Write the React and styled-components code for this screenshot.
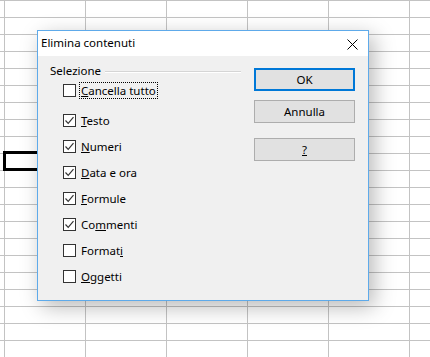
import styled, { createGlobalStyle } from "styled-components";

const GlobalStyle = createGlobalStyle`
  html, body {
    margin: 0;
    padding: 0;
    background: #fff;
  }
  body {
    font-family: "Noto Sans", "Liberation Sans", sans-serif;
    font-size: 11.5px;
    color: #000;
  }
`;

const OPTIONS = [
  { pre: "", key: "C", post: "ancella tutto", checked: false, focused: true },
  { pre: "", key: "T", post: "esto", checked: true },
  { pre: "", key: "N", post: "umeri", checked: true },
  { pre: "", key: "D", post: "ata e ora", checked: true },
  { pre: "", key: "F", post: "ormule", checked: true },
  { pre: "Co", key: "m", post: "menti", checked: true },
  { pre: "Format", key: "i", post: "", checked: false },
  { pre: "", key: "O", post: "ggetti", checked: false },
];

function CheckBox({ checked }) {
  return (
    <Box>
      {checked && (
        <svg width="11" height="11" viewBox="0 0 11 11">
          <polyline
            points="1.5,5.5 4.2,8.3 9.5,2.2"
            fill="none"
            stroke="#333"
            strokeWidth="1.2"
          />
        </svg>
      )}
    </Box>
  );
}

function App() {
  return (
    <>
      <GlobalStyle />
      <Sheet>
        <SelectedCell />
        <Dialog>
          <TitleBar>
            <Title>Elimina contenuti</Title>
            <CloseIcon width="11" height="11" viewBox="0 0 11 11">
              <path d="M0.5 0.5 L10.5 10.5 M10.5 0.5 L0.5 10.5" stroke="#000" strokeWidth="1" />
            </CloseIcon>
          </TitleBar>
          <Body>
            <Group>
              <GroupHeader>
                <span>Selezione</span>
                <Rule />
              </GroupHeader>
              <List>
                {OPTIONS.map((o, i) => (
                  <Row key={i} $first={i === 0}>
                    <CheckBox checked={o.checked} />
                    <Label $focused={o.focused}>
                      {o.pre}
                      <u>{o.key}</u>
                      {o.post}
                    </Label>
                  </Row>
                ))}
              </List>
            </Group>
            <Buttons>
              <Button $default>OK</Button>
              <Button>Annulla</Button>
              <Button $gap>
                <u>?</u>
              </Button>
            </Buttons>
          </Body>
        </Dialog>
      </Sheet>
    </>
  );
}

export default App;

const Sheet = styled.div`
  position: relative;
  width: 430px;
  height: 357px;
  overflow: hidden;
  background-color: #fff;
  background-image: linear-gradient(to right, #c3c3c3 1px, transparent 1px),
    linear-gradient(to bottom, #c3c3c3 1px, transparent 1px);
  background-size: 81px 17px;
  background-position: 4px 0;
`;

const SelectedCell = styled.div`
  position: absolute;
  left: 3px;
  top: 151px;
  width: 82px;
  height: 20px;
  box-sizing: border-box;
  border: 3px solid #000;
`;

const Dialog = styled.div`
  position: absolute;
  left: 37px;
  top: 30px;
  width: 332px;
  height: 271px;
  box-sizing: border-box;
  border: 1px solid #5eaaea;
  background: #f0f0f0;
  box-shadow: 5px 6px 20px rgba(0, 0, 0, 0.28);
  display: flex;
  flex-direction: column;
`;

const TitleBar = styled.div`
  height: 25px;
  background: #fff;
  display: flex;
  align-items: center;
  justify-content: space-between;
  padding: 0 10px 0 3px;
`;

const Title = styled.div`
  line-height: 16px;
  margin-top: -1px;
`;

const CloseIcon = styled.svg`
  display: block;
  margin-top: 1px;
`;

const Body = styled.div`
  flex: 1;
  display: flex;
  padding: 8px 13px 0 12px;
  gap: 13px;
`;

const Group = styled.div`
  width: 191px;
`;

const GroupHeader = styled.div`
  display: flex;
  align-items: center;
  height: 14px;
  line-height: 14px;
  gap: 4px;
`;

const Rule = styled.div`
  flex: 1;
  height: 1px;
  background: #d5d5d5;
  border-bottom: 1px solid #fff;
  margin-top: 1px;
`;

const List = styled.div`
  display: flex;
  flex-direction: column;
  padding-left: 13px;
  margin-top: -1px;
`;

const Row = styled.div`
  display: flex;
  align-items: center;
  height: 26px;
  margin-bottom: ${(p) => (p.$first ? "4px" : "0")};
  gap: 4px;
`;

const Box = styled.div`
  width: 13px;
  height: 13px;
  box-sizing: border-box;
  border: 1px solid #333;
  background: #fff;
  display: flex;
  align-items: center;
  justify-content: center;
`;

const Label = styled.span`
  line-height: 15px;
  padding: 0 1px;
  outline: ${(p) => (p.$focused ? "1px dotted #000" : "none")};
  outline-offset: 0;
`;

const Buttons = styled.div`
  display: flex;
  flex-direction: column;
  gap: 9px;
  padding-top: 4px;
`;

const Button = styled.div`
  width: 101px;
  height: 23px;
  box-sizing: border-box;
  background: #e1e1e1;
  border: ${(p) => (p.$default ? "2px solid #0078d7" : "1px solid #adadad")};
  display: flex;
  align-items: center;
  justify-content: center;
  margin-top: ${(p) => (p.$gap ? "6px" : "0")};
`;
